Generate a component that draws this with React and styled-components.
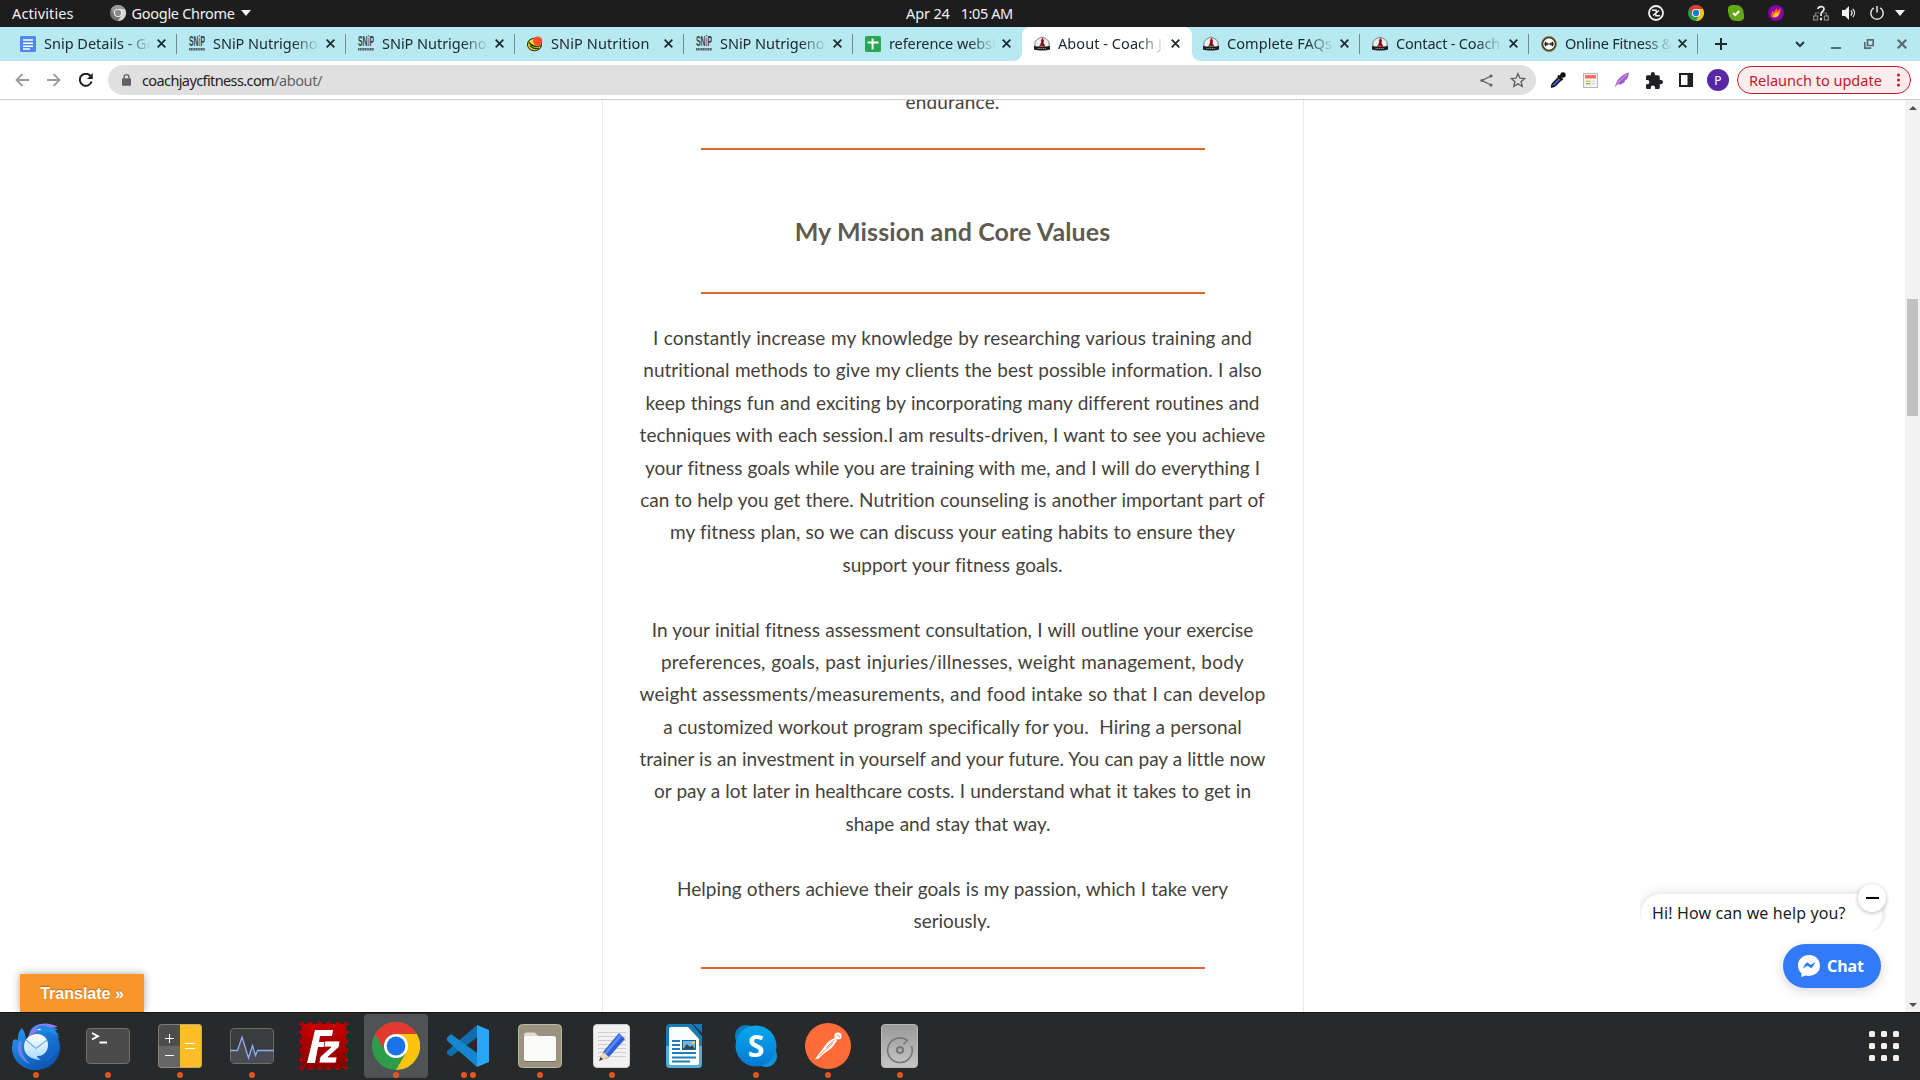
import React from 'react';
import styled, { createGlobalStyle, css } from 'styled-components';

const UI = '"Noto Sans", "Open Sans", sans-serif';

const Global = createGlobalStyle`
  * { box-sizing: border-box; }
  html, body { margin: 0; padding: 0; background: #fff; overflow: hidden; }
  svg { display: block; flex: none; }
`;

const Screen = styled.div`
  width: 1920px;
  height: 1080px;
  display: flex;
  flex-direction: column;
  overflow: hidden;
  font-family: ${UI};
  font-size: 14.5px;
`;

const Label = styled.span`
  white-space: pre;
  letter-spacing: ${(p) => p.$track || 0}px;
`;

const Slot = styled.span`
  width: ${(p) => p.$w || 32}px;
  flex: none;
  display: flex;
  align-items: center;
  justify-content: center;
`;

/* ---------- desktop top bar ---------- */

const TopBar = styled.header`
  height: 27px;
  flex: none;
  display: grid;
  grid-template-columns: 906px 1fr auto;
  align-items: center;
  background: #1d1d1d;
  color: #f2f2f2;
  padding: 0 11px 2px 0;
`;

const TopLeft = styled.div`
  display: flex;
  align-items: center;
  padding-left: 12px;
`;

const AppMenu = styled.div`
  display: flex;
  align-items: center;
  margin-left: 36px;
  gap: 6px;
`;

const Clock = styled.div`
  display: flex;
  gap: 11px;
`;

const Tray = styled.div`
  display: flex;
  align-items: center;
  padding-top: 1px;
`;

const TrayGap = styled.span`
  width: 11px;
`;

/* ---------- tab strip ---------- */

const TabStrip = styled.nav`
  height: 34px;
  flex: none;
  display: flex;
  align-items: stretch;
  background: #b6e9f1;
  color: #202a2e;
  padding-left: 8px;
`;

const Tab = styled.div`
  width: 169px;
  flex: none;
  display: flex;
  align-items: center;
  position: relative;
  padding: 0 0 1px 12px;
  ${(p) =>
    p.$active &&
    css`
      background: #fff;
      border-radius: 8px 8px 0 0;
      box-shadow: 1px 0 0 #fff;
      &::before,
      &::after {
        content: '';
        position: absolute;
        bottom: 0;
        width: 8px;
        height: 8px;
      }
      &::before {
        left: -8px;
        background: radial-gradient(circle at 0 0, transparent 7.5px, #fff 8px);
      }
      &::after {
        right: -9px;
        background: radial-gradient(circle at 100% 0, transparent 7.5px, #fff 8px);
      }
    `}
`;

const TabTitle = styled.div`
  width: 107px;
  margin-left: 8px;
  padding-bottom: 1px;
  overflow: hidden;
  white-space: pre;
  letter-spacing: ${(p) => p.$track}px;
  mask-image: linear-gradient(90deg, #000 ${(p) => (p.$full ? 100 : 75)}%, ${(p) => (p.$full ? '#000' : 'transparent')} 100%);
`;

const TabClose = styled.span`
  width: 21px;
  display: flex;
  justify-content: center;
`;

const TabRule = styled.span`
  width: 1px;
  height: 20px;
  margin-left: auto;
  background: ${(p) => (p.$show ? '#6d8e95' : 'transparent')};
`;

const NewTab = styled(Slot)`
  margin-left: 7px;
  padding-bottom: 1px;
`;

const WindowButtons = styled.div`
  display: flex;
  align-items: center;
  margin-left: auto;
  padding-right: 1px;
`;

/* ---------- toolbar ---------- */

const Toolbar = styled.div`
  height: 39px;
  flex: none;
  display: flex;
  align-items: center;
  padding-left: 6px;
  background: #fff;
  border-bottom: 1px solid #cbcbcb;
`;

const Omnibox = styled.div`
  width: 1428px;
  height: 30px;
  margin: 0 6px;
  padding: 0 2px;
  display: flex;
  align-items: center;
  border-radius: 15px;
  background: #e0e0e0;
  color: #202124;
`;

const Host = styled(Label)`
  padding-bottom: 1px;
`;

const Path = styled(Host)`
  color: #5f6368;
  flex: 1;
`;

const Avatar = styled.span`
  width: 22px;
  height: 22px;
  display: flex;
  align-items: center;
  justify-content: center;
  border-radius: 50%;
  background: #5727a8;
  color: #fff;
  font-size: 12px;
`;

const Relaunch = styled.button`
  width: 174px;
  height: 28px;
  margin: 0 0 0 3px;
  padding: 0 5px 1px 11px;
  display: flex;
  align-items: center;
  justify-content: space-between;
  border: 1px solid #c5172d;
  border-radius: 14px;
  background: #faecec;
  color: #c5172d;
  font: 14.5px ${UI};
`;

/* ---------- page ---------- */

const Viewport = styled.main`
  height: 912px;
  flex: none;
  display: flex;
  position: relative;
  overflow: hidden;
  background: #fff;
`;

const Page = styled.div`
  flex: 1;
  display: flex;
  justify-content: center;
  overflow: hidden;
`;

const Column = styled.article`
  width: 702px;
  height: 912px;
  display: flex;
  flex-direction: column;
  align-items: center;
  border: solid #ebebeb;
  border-width: 0 1px;
  overflow: hidden;
  color: #45423b;
  font-family: Lato, 'Open Sans', sans-serif;
  font-size: 19px;
  line-height: 32.4px;
  font-variant-ligatures: none;
`;

const Line = styled.span`
  display: block;
  width: ${(p) => p.$w}px;
  height: 32.4px;
  flex: none;
  white-space: pre-wrap;
  text-align-last: justify;
  letter-spacing: ${(p) => p.$track}px;
  margin-right: ${(p) => p.$tail || 0}px;
`;

const Previous = styled.div`
  margin-top: -14px;
  height: 32.4px;
  flex: none;
`;

const Rule = styled.hr`
  width: 504px;
  height: 2px;
  flex: none;
  margin: ${(p) => p.$top}px 0 0;
  border: 0;
  background: #dd6632;
`;

const Heading = styled.h2`
  margin: 63px 0 0;
  height: 36px;
  flex: none;
  font-size: 25px;
  line-height: 36px;
  letter-spacing: 0.12px;
  color: #5f5b4f;
`;

const Copy = styled.div`
  margin-top: 28px;
  height: 615.6px;
  flex: none;
  display: flex;
  flex-direction: column;
  gap: 32.4px;
`;

const Paragraph = styled.p`
  margin: 0;
  display: flex;
  flex-direction: column;
  align-items: center;
`;

const Scrollbar = styled.aside`
  width: 15px;
  flex: none;
  display: flex;
  flex-direction: column;
  align-items: center;
  padding: 6px 0 5px;
  background: #f1f1f1;
`;

const Thumb = styled.div`
  width: 11px;
  height: 117px;
  margin: 189px 0 auto;
  background: #c1c1c1;
`;

const Translate = styled.button`
  position: absolute;
  left: 20px;
  bottom: 0;
  width: 124px;
  height: 38px;
  padding: 2px 0 0;
  border: 0;
  background: #f8952b;
  box-shadow: 0 0 8px rgba(0, 0, 0, 0.35);
  color: #fff;
  font: bold 16px 'Liberation Sans', sans-serif;
  text-shadow: 0 -1px 1px rgba(120, 60, 0, 0.5);
`;

const BubbleClip = styled.div`
  position: absolute;
  left: 1640px;
  top: 780px;
  width: 247px;
  height: 52px;
  padding: 14px 5px 0 1px;
  overflow: hidden;
  border-radius: 20px;
`;

const Bubble = styled.div`
  height: 40px;
  padding-left: 11px;
  border-radius: 20px;
  background: #fff;
  box-shadow: 0 0 12px rgba(0, 0, 0, 0.16);
  color: #1c1e21;
  font-size: 16px;
  line-height: 38px;
`;

const Minimise = styled.button`
  position: absolute;
  left: 1858px;
  top: 784px;
  width: 28px;
  height: 28px;
  padding: 0;
  display: flex;
  align-items: center;
  justify-content: center;
  border: 0;
  border-radius: 50%;
  background: #fff;
  box-shadow: 0 1px 4px rgba(0, 0, 0, 0.28);
`;

const ChatButton = styled.button`
  position: absolute;
  left: 1783px;
  top: 844px;
  width: 98px;
  height: 44px;
  padding: 0 0 0 14px;
  display: flex;
  align-items: center;
  gap: 6px;
  border: 0;
  border-radius: 22px;
  background: #317bfb;
  box-shadow: 0 3px 12px rgba(0, 0, 0, 0.16);
  color: #fff;
  font: bold 16px ${UI};
`;

/* ---------- dock ---------- */

const Dock = styled.footer`
  flex: 1;
  display: flex;
  align-items: flex-start;
  gap: 8px;
  padding: 1px 21px 0 4px;
  border-top: 1px solid #141416;
  background: #28292b;
`;

const DockItem = styled.div`
  width: 64px;
  height: 64px;
  display: flex;
  flex-direction: column;
  align-items: center;
  justify-content: flex-end;
  gap: 2px;
  border-radius: 4px;
  background: ${(p) => (p.$active ? '#515254' : 'transparent')};
`;

const Dots = styled.div`
  height: 6px;
  display: flex;
  gap: 3px;
  i {
    width: 6px;
    height: 6px;
    border-radius: 50%;
    background: #e95420;
  }
`;

const AppGrid = styled.div`
  display: grid;
  grid-template-columns: repeat(3, 6px);
  gap: 6px;
  margin: 17px 0 0 auto;
  i {
    height: 6px;
    border-radius: 1.5px;
    background: #f1f1ef;
  }
`;

/* ---------- small drawings ---------- */

const Cross = ({ size = 8, color = '#202a2e', weight = 1.7 }) => (
  <svg width={size} height={size} viewBox="0 0 8 8" stroke={color} strokeWidth={(weight * 8) / size} fill="none">
    <path d="M.6.6l6.8 6.8M7.4.6L.6 7.4" />
  </svg>
);

const Caret = () => (
  <svg width="10" height="6" viewBox="0 0 10 6" fill="#f2f2f2"><path d="M0 0h10L5 6z" /></svg>
);

const Docs = () => (
  <svg width="16" height="16" viewBox="0 0 16 16">
    <rect width="16" height="16" rx="1.5" fill="#4f86ee" />
    <path d="M3 4h10M3 7.2h10M3 10.2h10M3 13h7" stroke="#fff" strokeWidth="1.6" />
  </svg>
);

const Snip = () => (
  <svg width="16" height="17" viewBox="0 0 16 17">
    <text transform="scale(1 2)" x="0" y="5.7" fontFamily="Liberation Sans" fontWeight="700" fontSize="7" textLength="16" lengthAdjust="spacingAndGlyphs" fill="#33464a">SNiP</text>
    <path d="M10 2.5v8" stroke="#e9a08f" strokeWidth="1" />
    <path d="M0 14.2h16" stroke="#4c5d61" strokeWidth="2.6" strokeDasharray="1.3 .4" />
  </svg>
);

const Nutrition = () => (
  <svg width="16" height="16" viewBox="0 0 16 16">
    <ellipse cx="7.5" cy="8.5" rx="7" ry="6.3" fill="#f3df22" stroke="#2c351b" strokeWidth="1.1" />
    <path d="M2 6.5c3 4 8 5 12 3M3 9.5c2 3 6 3.5 9 2.5" fill="none" stroke="#26311a" strokeWidth="1.3" />
    <circle cx="10.7" cy="5" r="4.6" fill="#fb4b27" />
  </svg>
);

const Sheets = () => (
  <svg width="16" height="16" viewBox="0 0 16 16">
    <rect width="16" height="16" rx="1.5" fill="#26a750" />
    <path d="M2.5 6.5h11M7.6 2.5v11" stroke="#fff" strokeWidth="2" />
  </svg>
);

const Coach = () => (
  <svg width="16" height="16" viewBox="0 0 16 16">
    <path d="M1 13V5.500l3-2.700 4-1.800 4 1.800 3 2.700V13z" fill="#eef0f0" stroke="#70787a" strokeWidth=".9" />
    <path d="M8.500 1.200L6.800 4.500l.3 3-2.300 3h6.700L9.800 7.500V4z" fill="#b31d28" />
    <path d="M9.300 4l-2 4.500M6.500 7.500l4 2" stroke="#3b1114" strokeWidth=".8" />
    <path d="M0 9.800c3 1.200 12 1.200 16 0v3.700c-4 1.400-12 1.400-16 0z" fill="#1b1d1e" />
    <path d="M3.500 12.500h9" stroke="#aaa" strokeWidth=".8" strokeDasharray="1.200 .6" />
  </svg>
);

const Barbell = () => (
  <svg width="16" height="16" viewBox="0 0 16 16">
    <circle cx="8" cy="8" r="6.7" fill="#fbfaf5" stroke="#2c2a24" strokeWidth="1.9" />
    <circle cx="8" cy="8" r="7.4" fill="none" stroke="#b59a4a" strokeWidth=".8" />
    <path d="M3 8h10M4.500 5.800v4.400M11.500 5.800v4.400M6 6.500v3M10 6.500v3" stroke="#222" strokeWidth="1.2" />
  </svg>
);

const Chrome = ({ size, mono }) => {
  const [r, y, g, b] = mono ? ['#9a9a9a', '#d7d7d7', '#737373', '#8b8b8b'] : ['#e23a2e', '#fcc40c', '#2d9d4c', '#1a73e8'];
  return (
    <svg width={size} height={size} viewBox="0 0 48 48">
      <circle cx="24" cy="24" r="24" fill={g} />
      <path d="M24 12h20.800A24 24 0 0 1 24 48l10.400-18z" fill={y} />
      <path d="M24 0a24 24 0 0 1 20.800 12H24A12 12 0 0 0 13.600 30L3.200 12A24 24 0 0 1 24 0z" fill={r} />
      <circle cx="24" cy="24" r="12" fill="#fff" />
      <circle cx="24" cy="24" r="9.4" fill={b} />
    </svg>
  );
};

/* ---------- tray drawings ---------- */

const trayIcons = [
  [40, <svg width="16" height="16" viewBox="0 0 16 16" fill="none" stroke="#f2f2f2"><circle cx="8" cy="8" r="7" strokeWidth="1.8" /><path d="M4 5.300h4.200v2.500M12 10.700H7.800V8.200M5 10.500l6-5" strokeWidth="1.400" /></svg>],
  [40, <Chrome size={16} />],
  [40, <svg width="16" height="16" viewBox="0 0 16 16"><path d="M4 0h4a7.500 7.500 0 0 1 7.500 8A5 5 0 0 1 12 16H8A7.500 7.500 0 0 1 .5 8 5 5 0 0 1 4 0z" fill="#63a915" /><path d="M5 8l2.200 2.200L11.200 6" fill="none" stroke="#fff" strokeWidth="1.900" /></svg>],
  [40, <svg width="16" height="16" viewBox="0 0 16 16"><circle cx="8" cy="8" r="8" fill="#8303ab" /><path d="M3.300 11.500c-.5-2 .3-4 1.700-6 .2 1 .5 1.400 1 1.800C6.500 5.500 8 4.500 9 3c.2 1.200 0 2 .3 2.800.8-.8 2.200-1.500 3.400-3C12.500 6.500 12 12.800 7 12.800c-1.800 0-3-.3-3.700-1.300z" fill="#ff5a2c" /><path d="M4.500 11.500C5 9 7.500 9 8.500 6.500c.2 1 .3 1.500.5 2 .8-.5 1.500-1.200 2.500-2.500 0 3.500-1.500 6-4.500 6-1 0-2-.1-2.500-.5z" fill="#ffc428" /></svg>],
  [11, null],
  [28, <svg width="16" height="16" viewBox="0 0 16 16" fill="none"><path d="M2.500 11V8h4M13.500 11V8H10" stroke="#777" strokeWidth="1.200" /><rect x=".6" y="11" width="4" height="4" stroke="#888" strokeWidth="1.200" /><rect x="11.400" y="11" width="4" height="4" stroke="#888" strokeWidth="1.200" /><path d="M5 4c0-3 6-3.500 6 0 0 2.500-3 2.500-3 5.500v1.500" stroke="#eee" strokeWidth="1.700" /><path d="M8 12.700v2.500" stroke="#eee" strokeWidth="2" /></svg>],
  [28, <svg width="16" height="16" viewBox="0 0 16 16" fill="none"><path d="M1 5h3l4-4v14l-4-4H1z" fill="#f2f2f2" /><path d="M9.800 5.500c1.400 1.400 1.400 3.600 0 5M11.800 3.800c2.200 2.400 2.200 6 0 8.400" stroke="#f2f2f2" strokeWidth="1.200" /></svg>],
  [28, <svg width="16" height="16" viewBox="0 0 16 16" fill="none" stroke="#e8e8e8" strokeWidth="1.500"><path d="M4.800 2.800a6.200 6.200 0 1 0 6.400 0M8 1v6.500" /></svg>],
  [18, <Caret />],
];

const windowIcons = [
  [38, <svg width="10" height="7" viewBox="0 0 10 7" fill="none" stroke="#2b3a3e" strokeWidth="2"><path d="M1 1l4 4 4-4" /></svg>],
  [34, <svg width="10" height="10" viewBox="0 0 10 10"><path d="M0 8h10v2H0z" fill="#596b70" /></svg>],
  [32, <svg width="10" height="10" viewBox="0 0 10 10" fill="none" stroke="#596b70" strokeWidth="1.700"><path d="M3.500.8h5.700v5.700H3.500zM.8 3v6.200h6.500" /></svg>],
  [34, <Cross size={10} color="#596b70" weight={2.2} />],
];

const extensionIcons = [
  <svg width="16" height="16" viewBox="0 0 16 16"><path d="M1.500 15c0-2 .5-3 1.500-4l6-6 2.500 2.500-6 6c-1 1-2 1.500-4 1.500z" fill="#3f55c9" stroke="#111" strokeWidth="1.300" /><path d="M8 3.500l4.500 4.500M9.800 5.300L13 2" stroke="#111" strokeWidth="2.400" /><circle cx="13" cy="3" r="2.700" fill="#111" /></svg>,
  <svg width="15" height="15" viewBox="0 0 15 15"><rect x=".5" y=".5" width="14" height="14" fill="#f7f7f5" stroke="#b9b9b9" /><path d="M2 2h11v3.500H2z" fill="#fa6b60" /><path d="M3 8.200h4.500" stroke="#f5a623" strokeWidth="1.200" /><path d="M3 10.700h4.500" stroke="#58bd58" strokeWidth="1.200" /><path d="M9 8.200h3.500M9 10.700h3.500" stroke="#ccc" /></svg>,
  <svg width="16" height="16" viewBox="0 0 16 16"><path d="M1 15.500C2 9 6 3 15 .5c-.5 3-1 5-2.500 7l-2 .7 1 .7C9 12 6 13 3.500 12.500z" fill="#a45fc7" /><path d="M1.500 15C4 10 8 6 13 2.500" stroke="#dcb9ee" fill="none" /></svg>,
  <svg width="17" height="17" viewBox="2 1 21 21" fill="#202124"><path d="M20.500 11H19V7c0-1.100-.9-2-2-2h-4V3.500a2.500 2.500 0 0 0-5 0V5H4c-1.100 0-2 .9-2 2v3.800h1.500a2.700 2.700 0 0 1 0 5.400H2V20c0 1.100.9 2 2 2h3.800v-1.500a2.700 2.700 0 0 1 5.400 0V22H17c1.100 0 2-.9 2-2v-4h1.500a2.500 2.500 0 0 0 0-5z" /></svg>,
  <svg width="14" height="14" viewBox="0 0 14 14"><rect x="1" y="1" width="12" height="12" fill="#fff" stroke="#202124" strokeWidth="2" /><path d="M8.500 1H13v12H8.500z" fill="#202124" /></svg>,
];

/* ---------- dock drawings (48x48) ---------- */

const Box48 = ({ children }) => (
  <svg width="48" height="48" viewBox="0 0 48 48">{children}</svg>
);

const Thunderbird = () => (
  <Box48>
    <defs>
      <linearGradient id="tb" x1="0" y1="0" x2=".6" y2="1"><stop offset="0" stopColor="#2a9cf5" /><stop offset="1" stopColor="#0c57b7" /></linearGradient>
      <linearGradient id="tbe" x1="0" y1="0" x2="0" y2="1"><stop offset="0" stopColor="#fff" /><stop offset="1" stopColor="#a7d9fa" /></linearGradient>
    </defs>
    <path d="M10 6c-4 4-4 8-4 12-2-1-4-1-5 1-1 2 0 3-1 6-.5 12 10 23 24 23s24-10 24-23c0-3-1-6-2-9l1.500-1L45 13h2l-4-5h3C41 3 34 2 30 2 23 2 18 6 17 13l-3 6c0-4-1-9-4-13z" fill="url(#tb)" />
    <path d="M46 5C39 1 30 0 24 4c-5 3-6 8-8 11l8-5c2-1 2-5 7-5 4 0 8 1 15 0z" fill="#8e7cf0" />
    <path d="M24 6c4-4 12-3 19 2l2 6c-7-5-13-6-18-3z" fill="#1e8bea" />
    <path d="M25 7.500l3-1 1 1-2 1z" fill="#fff" />
    <path d="M7 19C3 29 9 39 18 42c-6-6-10-12-8-22z" fill="#6b82ee" />
    <path d="M31 39c6-2 9-7 9-13 3 7-1 13-9 13z" fill="#1766d1" />
    <path d="M12 25c0-8 6-13 13-13 7 0 11 5 11 11S32 34 26 34c-2 0-1 2 3 4-9 0-17-5-17-13z" fill="url(#tbe)" />
    <path d="M14 18l10 8.500L35 18" fill="none" stroke="#77b1df" strokeWidth="1.300" />
  </Box48>
);

const Terminal = () => (
  <Box48>
    <rect x="2.500" y="6.500" width="43" height="35" rx="3.500" fill="#4b4b4b" stroke="#71716e" />
    <path d="M8 11l6 3.200L8 17.500M15.500 20.500H23" fill="none" stroke="#fff" strokeWidth="1.900" />
  </Box48>
);

const Calculator = () => (
  <Box48>
    <rect x="2" y="2" width="44" height="44" rx="4" fill="#4d4d4d" />
    <path d="M2 24h22v22H6a4 4 0 0 1-4-4z" fill="#666" />
    <path d="M24 2h18a4 4 0 0 1 4 4v36a4 4 0 0 1-4 4H24z" fill="#fdbd27" />
    <rect x="2.500" y="2.500" width="43" height="43" rx="3.500" fill="none" stroke="#a09d91" strokeOpacity=".6" />
    <path d="M13.500 12v9M9 16.500h9M9 33.500h9M29 21.500h10M29 26.500h10" stroke="#fff" strokeWidth="1" />
  </Box48>
);

const Monitor = () => (
  <Box48>
    <rect x="2.500" y="6.500" width="43" height="35" rx="3.500" fill="#3a3b3c" stroke="#6b6b68" />
    <path d="M3 28.500h7L15 15l6 21 4-13 3 10 2-4.500h15V41H3z" fill="#4a4c54" />
    <path d="M2 28.500h7.500L14 15l6.500 21 4-12.500 3 10 2-5H46" fill="none" stroke="#8fadf5" strokeWidth="1.300" />
  </Box48>
);

const FileZilla = () => (
  <Box48>
    <defs><linearGradient id="fz" x1="0" y1="0" x2="0" y2="1"><stop offset="0" stopColor="#c70000" /><stop offset="1" stopColor="#850000" /></linearGradient></defs>
    <rect x="2" y="2" width="44" height="44" fill="url(#fz)" />
    <rect x="1.200" y="1.200" width="45.600" height="45.600" fill="none" stroke="#a80000" strokeWidth="2.400" strokeDasharray="5 4.120" strokeDashoffset="2.500" />
    <path d="M15 8h18l-1 6H20l-1 6h8l-1 5h-8l-3 16H7z" fill="#fff" />
    <path d="M25 19h15l-1 6-11 10h9l-1 6H19l1-6 11-10h-7z" fill="#fff" stroke="#a00" strokeWidth=".8" />
  </Box48>
);

const VSCode = () => (
  <Box48>
    <path d="M33 3L3 29v3l4 2.500 30-22z" fill="#0f6fae" />
    <path d="M33 45L3 18.500v-3L7 12l30 22z" fill="#1687cf" />
    <path d="M33 3l12 5v32l-12 5V3z" fill="#2aa6f2" />
  </Box48>
);

const Files = () => (
  <Box48>
    <rect x="2.500" y="2.500" width="43" height="43" rx="4" fill="#9b927f" stroke="#bdb6a6" />
    <path d="M8 13c0-1.500 1-2.500 2.500-2.500h8l4 3.500v5H8z" fill="#dedbd2" />
    <rect x="8" y="14" width="32" height="25" rx="2.500" fill="#fafaf8" />
    <path d="M9 39.500h30" stroke="#776f60" strokeWidth="1" />
  </Box48>
);

const Editor = () => (
  <Box48>
    <rect x="5.500" y="2.500" width="36" height="43" rx="3.500" fill="#f1f1f1" stroke="#cfcfcf" />
    <path d="M10 10.500h28M10 14.500h28M10 18.500h28M10 22.500h28M10 26.500h28M10 30.500h28M10 34.500h28" stroke="#cfcfcf" />
    <path d="M12 38l3-8L31 11l6 6-17 19z" fill="#2f5ed6" />
    <path d="M16 31L32 12l2 2-17 20z" fill="#5b8cf2" />
    <path d="M11 39l4-9 6 5z" fill="#f3d9b8" />
    <path d="M11 39l1.500-4 2.500 2.200z" fill="#333" />
  </Box48>
);

const Writer = () => (
  <Box48>
    <path d="M10 2h22l10 12v28a4 4 0 0 1-4 4H10a4 4 0 0 1-4-4V6a4 4 0 0 1 4-4z" fill="#1b7ab5" />
    <path d="M6 24h36v18a4 4 0 0 1-4 4H10a4 4 0 0 1-4-4z" fill="#55abd9" />
    <path d="M11 5h17l11 12v24a2 2 0 0 1-2 2H11a2 2 0 0 1-2-2V7a2 2 0 0 1 2-2z" fill="#fafcfd" />
    <path d="M33 2h9v9z" fill="#1479b2" />
    <path d="M12 19h8M12 23h8M12 27h8M12 31h24M12 35.500h24M12 39.500h18" stroke="#1e7eb8" strokeWidth="1.900" />
    <rect x="22.500" y="18.500" width="13" height="9" fill="#69b9e9" stroke="#1b6190" />
    <path d="M23 27l4-5 3 3 2-2 3 4z" fill="#3b444b" />
    <circle cx="33.500" cy="20.500" r="1.500" fill="#ffd23d" />
  </Box48>
);

const Skype = () => (
  <Box48>
    <defs><linearGradient id="sk" x1="0" y1="0" x2="0" y2="1"><stop offset="0" stopColor="#05a9ec" /><stop offset="1" stopColor="#0878d4" /></linearGradient></defs>
    <circle cx="14" cy="14" r="11" fill="#0b7cc3" />
    <circle cx="34" cy="34" r="11" fill="#1195da" />
    <circle cx="24" cy="24" r="20.500" fill="url(#sk)" />
    <text x="24" y="34.500" textAnchor="middle" fontFamily="Open Sans" fontWeight="700" fontSize="30" fill="#fff">S</text>
  </Box48>
);

const Postman = () => (
  <Box48>
    <circle cx="24" cy="24" r="23" fill="#ff6c37" />
    <path d="M11 37.500l1.500-2.500 9-12c3-4 6-6 9.500-7l2 2.500c-2 3-4 6-6 8l-7 5-5.500 5z" fill="#fff" />
    <circle cx="34" cy="14" r="3.600" fill="#fff" />
    <path d="M33 13l3 2M15 34L29 21M22 26l8-8" stroke="#ff6c37" strokeWidth=".8" />
  </Box48>
);

const Disks = () => (
  <Box48>
    <defs><linearGradient id="dk" x1="0" y1="0" x2="0" y2="1"><stop offset="0" stopColor="#999" /><stop offset="1" stopColor="#c6c6c6" /></linearGradient></defs>
    <rect x="5.500" y="2.500" width="36" height="43" rx="3.500" fill="url(#dk)" stroke="#b8b8b8" />
    <path d="M31.500 18.500a12.300 12.300 0 1 0 4 5.500M27.500 22l4.500-4" fill="none" stroke="#767676" strokeWidth="1.600" />
    <circle cx="24" cy="28" r="3" fill="none" stroke="#767676" strokeWidth="2" />
  </Box48>
);

/* ---------- content ---------- */

const tabs = [
  { icon: <Docs />, title: 'Snip Details - Google', track: 0 },
  { icon: <Snip />, title: 'SNiP Nutrigenomics', track: -0.04 },
  { icon: <Snip />, title: 'SNiP Nutrigenomics', track: -0.04 },
  { icon: <Nutrition />, title: 'SNiP Nutrition', track: 0.11, full: true },
  { icon: <Snip />, title: 'SNiP Nutrigenomics', track: -0.04 },
  { icon: <Sheets />, title: 'reference website', track: -0.09, last: true },
  { icon: <Coach />, title: 'About - Coach Jay', track: 0.06, active: true },
  { icon: <Coach />, title: 'Complete FAQs', track: 0.08 },
  { icon: <Coach />, title: 'Contact - Coach', track: -0.18 },
  { icon: <Barbell />, title: 'Online Fitness & ', track: -0.22 },
];

const paragraphs = [
  [
    ['I constantly increase my knowledge by researching various training and', 599, 0.11],
    ['nutritional methods to give my clients the best possible information. I also', 618.4, 0.01],
    ['keep things fun and exciting by incorporating many different routines and', 614, 0.02],
    ['techniques with each session.I am results-driven, I want to see you achieve', 625.8, 0.04],
    ['your fitness goals while you are training with me, and I will do everything I', 615, -0.02],
    ['can to help you get there. Nutrition counseling is another important part of', 624.5, -0.02],
    ['my fitness plan, so we can discuss your eating habits to ensure they', 565, 0.03],
    ['support your fitness goals.', 220, -0.02],
  ],
  [
    ['In your initial fitness assessment consultation, I will outline your exercise', 601.5, -0.04],
    ['preferences, goals, past injuries/illnesses, weight management, body', 583, 0.21],
    ['weight assessments/measurements, and food intake so that I can develop', 626, 0.19],
    ['a customized workout program specifically for you.\u00a0 Hiring a personal', 578.5, 0.04],
    ['trainer is an investment in yourself and your future. You can pay a little now', 626, -0.04],
    ['or pay a lot later in healthcare costs. I understand what it takes to get in', 597, 0],
    ['shape and stay that way.', 205, -0.02, 9],
  ],
  [
    ['Helping others achieve their goals is my passion, which I take very', 551, 0.04],
    ['seriously.', 78, -0.05],
  ],
];

const apps = [
  { art: <Thunderbird />, dots: 1 },
  { art: <Terminal />, dots: 1 },
  { art: <Calculator />, dots: 1 },
  { art: <Monitor />, dots: 1 },
  { art: <FileZilla />, dots: 0 },
  { art: <Chrome size={48} />, dots: 1, active: true },
  { art: <VSCode />, dots: 2 },
  { art: <Files />, dots: 1 },
  { art: <Editor />, dots: 1 },
  { art: <Writer />, dots: 0 },
  { art: <Skype />, dots: 1 },
  { art: <Postman />, dots: 1 },
  { art: <Disks />, dots: 1 },
];

export default function App() {
  return (
    <Screen>
      <Global />
      <TopBar>
        <TopLeft>
          <Label $track={0.12}>Activities</Label>
          <AppMenu>
            <Chrome size={16} mono />
            <Label $track={-0.31}>Google Chrome</Label>
            <Caret />
          </AppMenu>
        </TopLeft>
        <Clock>
          <Label $track={-0.14}>Apr 24</Label>
          <Label $track={-0.42}>1:05 AM</Label>
        </Clock>
        <Tray>
          {trayIcons.map(([w, art], i) => (art ? <Slot key={i} $w={w}>{art}</Slot> : <TrayGap key={i} />))}
        </Tray>
      </TopBar>

      <TabStrip>
        {tabs.map((t, i) => (
          <Tab key={i} $active={t.active}>
            {t.icon}
            <TabTitle $track={t.track} $full={t.full}>{t.title}</TabTitle>
            <TabClose><Cross size={9} weight={1.8} /></TabClose>
            <TabRule $show={!t.active && !t.last} />
          </Tab>
        ))}
        <NewTab>
          <svg width="12" height="12" viewBox="0 0 12 12" stroke="#1f2a2d" strokeWidth="2"><path d="M6 0v12M0 6h12" /></svg>
        </NewTab>
        <WindowButtons>
          {windowIcons.map(([w, art], i) => <Slot key={i} $w={w}>{art}</Slot>)}
        </WindowButtons>
      </TabStrip>

      <Toolbar>
        <Slot><svg width="14" height="14" viewBox="0 0 14 14" fill="none" stroke="#9b9b9b" strokeWidth="1.8"><path d="M14 7H1.500M7.500 1L1.500 7l6 6" /></svg></Slot>
        <Slot><svg width="14" height="14" viewBox="0 0 14 14" fill="none" stroke="#9b9b9b" strokeWidth="1.8"><path d="M0 7h12.500M6.500 1l6 6-6 6" /></svg></Slot>
        <Slot><svg width="14" height="14" viewBox="0 0 14 14" fill="none" stroke="#202124" strokeWidth="2"><path d="M12.600 8.500A6 6 0 1 1 11.500 3" /><path d="M13.800 0v6H8z" fill="#202124" stroke="none" /></svg></Slot>
        <Omnibox>
          <Slot><svg width="9" height="12" viewBox="0 0 10 13"><rect y="4.500" width="10" height="8.500" rx="1" fill="#5f6368" /><path d="M2.300 5V3.300a2.700 2.700 0 0 1 5.400 0V5" fill="none" stroke="#5f6368" strokeWidth="1.500" /></svg></Slot>
          <Host $track={-0.61}>coachjaycfitness.com</Host>
          <Path $track={-0.4}>/about/</Path>
          <Slot><svg width="13" height="13" viewBox="0 0 13 13"><path d="M11 2L2 6.500l9 4.500" fill="none" stroke="#5f6368" strokeWidth="1.3" /><circle cx="11" cy="2" r="1.6" fill="#5f6368" /><circle cx="2" cy="6.500" r="1.6" fill="#5f6368" /><circle cx="11" cy="11" r="1.6" fill="#5f6368" /></svg></Slot>
          <Slot><svg width="16" height="16" viewBox="0 0 16 16"><path d="M8 1.700l1.900 4.400 4.800.4-3.600 3.100 1.100 4.700L8 11.800l-4.200 2.500 1.100-4.700L1.300 6.500l4.800-.4z" fill="none" stroke="#5f6368" strokeWidth="1.4" /></svg></Slot>
        </Omnibox>
        {extensionIcons.map((art, i) => <Slot key={i}>{art}</Slot>)}
        <Slot><Avatar>P</Avatar></Slot>
        <Relaunch>
          <Label>Relaunch to update</Label>
          <svg width="14" height="14" viewBox="0 0 14 14" fill="#c5172d"><circle cx="7.500" cy="2" r="1.500" /><circle cx="7.500" cy="7" r="1.500" /><circle cx="7.500" cy="12" r="1.500" /></svg>
        </Relaunch>
      </Toolbar>

      <Viewport>
        <Page>
          <Column>
            <Previous><Label $track={0.2}>endurance.</Label></Previous>
            <Rule $top={29.6} />
            <Heading>My Mission and Core Values</Heading>
            <Rule $top={43} />
            <Copy>
              {paragraphs.map((lines, i) => (
                <Paragraph key={i}>
                  {lines.map(([text, w, track, tail]) => <Line key={text} $w={w} $track={track} $tail={tail}>{text}</Line>)}
                </Paragraph>
              ))}
            </Copy>
            <Rule $top={29.4} />
          </Column>
        </Page>
        <Scrollbar>
          <svg width="8" height="4" viewBox="0 0 8 4" fill="#505050"><path d="M0 4h8L4 0z" /></svg>
          <Thumb />
          <svg width="8" height="4" viewBox="0 0 8 4" fill="#505050"><path d="M0 0h8L4 4z" /></svg>
        </Scrollbar>
        <Translate>Translate »</Translate>
        <BubbleClip><Bubble><Label $track={0.13}>Hi! How can we help you?</Label></Bubble></BubbleClip>
        <Minimise><svg width="13" height="2" viewBox="0 0 13 2"><path d="M0 0h13v2H0z" fill="#000" /></svg></Minimise>
        <ChatButton>
          <svg width="24" height="24" viewBox="0 0 24 24"><path d="M12 1C5.700 1 1 5.500 1 11.600c0 3.200 1.300 5.900 3.500 7.800v3.900l3.700-1.900c1.200.3 2.500.5 3.800.5 6.300 0 11-4.300 11-10.300S18.300 1 12 1z" fill="#fff" /><path d="M5.500 14.500l3.300-5.200c.5-.8 1.600-1 2.400-.4l2.500 1.900 5-2.800-3.300 5.200c-.5.8-1.600 1-2.400.4l-2.500-1.900z" fill="#317bfb" /></svg>
          <Label $track={-0.05}>Chat</Label>
        </ChatButton>
      </Viewport>

      <Dock>
        {apps.map((a, i) => (
          <DockItem key={i} $active={a.active}>
            {a.art}
            <Dots>{Array.from({ length: a.dots }, (_, n) => <i key={n} />)}</Dots>
          </DockItem>
        ))}
        <AppGrid>{Array.from({ length: 9 }, (_, n) => <i key={n} />)}</AppGrid>
      </Dock>
    </Screen>
  );
}
